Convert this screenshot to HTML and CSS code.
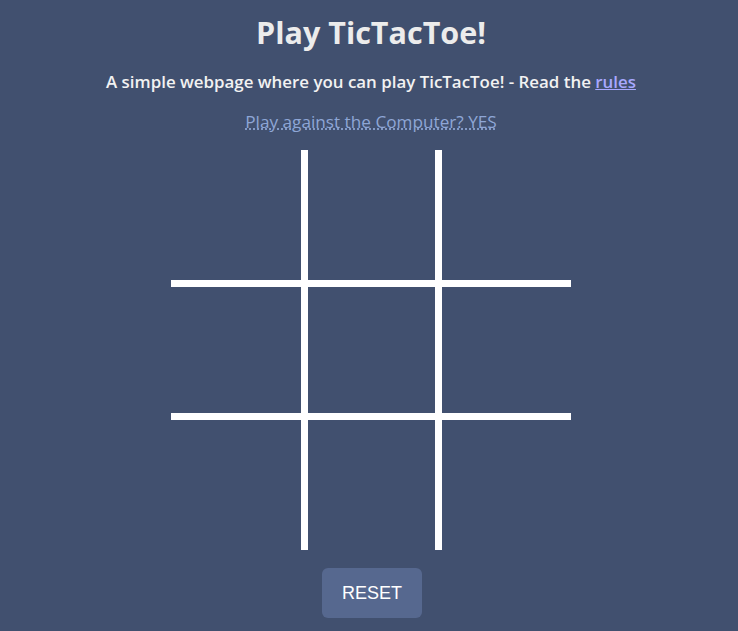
FILE: index.html
```html
<!DOCTYPE html>
<html lang="en">
<head>
<meta charset="utf-8">
<title>Play TicTacToe!</title>
<link rel="stylesheet" href="styles.css">
</head>
<body>
<main class="page">
  <h1 class="title">Play TicTacToe!</h1>
  <p class="intro">A simple webpage where you can play TicTacToe! - Read the <a class="rules" href="#">rules</a></p>
  <p class="mode"><span class="mode-link">Play against the Computer? YES</span></p>
  <div class="board">
    <div class="cell"></div>
    <div class="cell col-mid"></div>
    <div class="cell"></div>
    <div class="cell row-mid"></div>
    <div class="cell col-mid row-mid"></div>
    <div class="cell row-mid"></div>
    <div class="cell"></div>
    <div class="cell col-mid"></div>
    <div class="cell"></div>
  </div>
  <button class="reset" type="button">RESET</button>
</main>
</body>
</html>
```
FILE: styles.css
```css
html, body {
  margin: 0;
  padding: 0;
}
body {
  background: #41506f;
  color: #f0f0f0;
  font-family: "Open Sans", "Lato", sans-serif;
}
.page {
  display: flex;
  flex-direction: column;
  align-items: center;
  padding-top: 12px;
  padding-left: 4px;
}
.title {
  margin: 0;
  font-size: 30.5px;
  line-height: 40px;
  font-weight: 700;
  color: #ececec;
}
.intro {
  margin: 20px 0 0;
  font-size: 16.9px;
  line-height: 20px;
  font-weight: 600;
  color: #f2f2f2;
}
.rules {
  color: #a8a8ff;
  text-decoration: underline;
}
.mode {
  margin: 20px 0 0;
  font-size: 17.2px;
  line-height: 20px;
}
.mode-link {
  color: #8ea6d6;
  text-decoration: underline dotted;
  cursor: pointer;
}
.board {
  margin-top: 18px;
  display: grid;
  grid-template-columns: 130px 141px 129px;
  grid-template-rows: 130px 140px 130px;
  width: 400px;
  height: 400px;
}
.cell {
  box-sizing: border-box;
}
.col-mid {
  border-left: 7px solid #ffffff;
  border-right: 7px solid #ffffff;
}
.row-mid {
  border-top: 7px solid #ffffff;
  border-bottom: 7px solid #ffffff;
}
.col-mid.row-mid {
  border: 7px solid #ffffff;
}
.reset {
  margin-top: 18px;
  margin-left: 2px;
  width: 100px;
  height: 50px;
  border: none;
  border-radius: 6px;
  background: #56688f;
  color: #ffffff;
  font-family: "Liberation Sans", Arial, sans-serif;
  font-size: 18px;
}
```
